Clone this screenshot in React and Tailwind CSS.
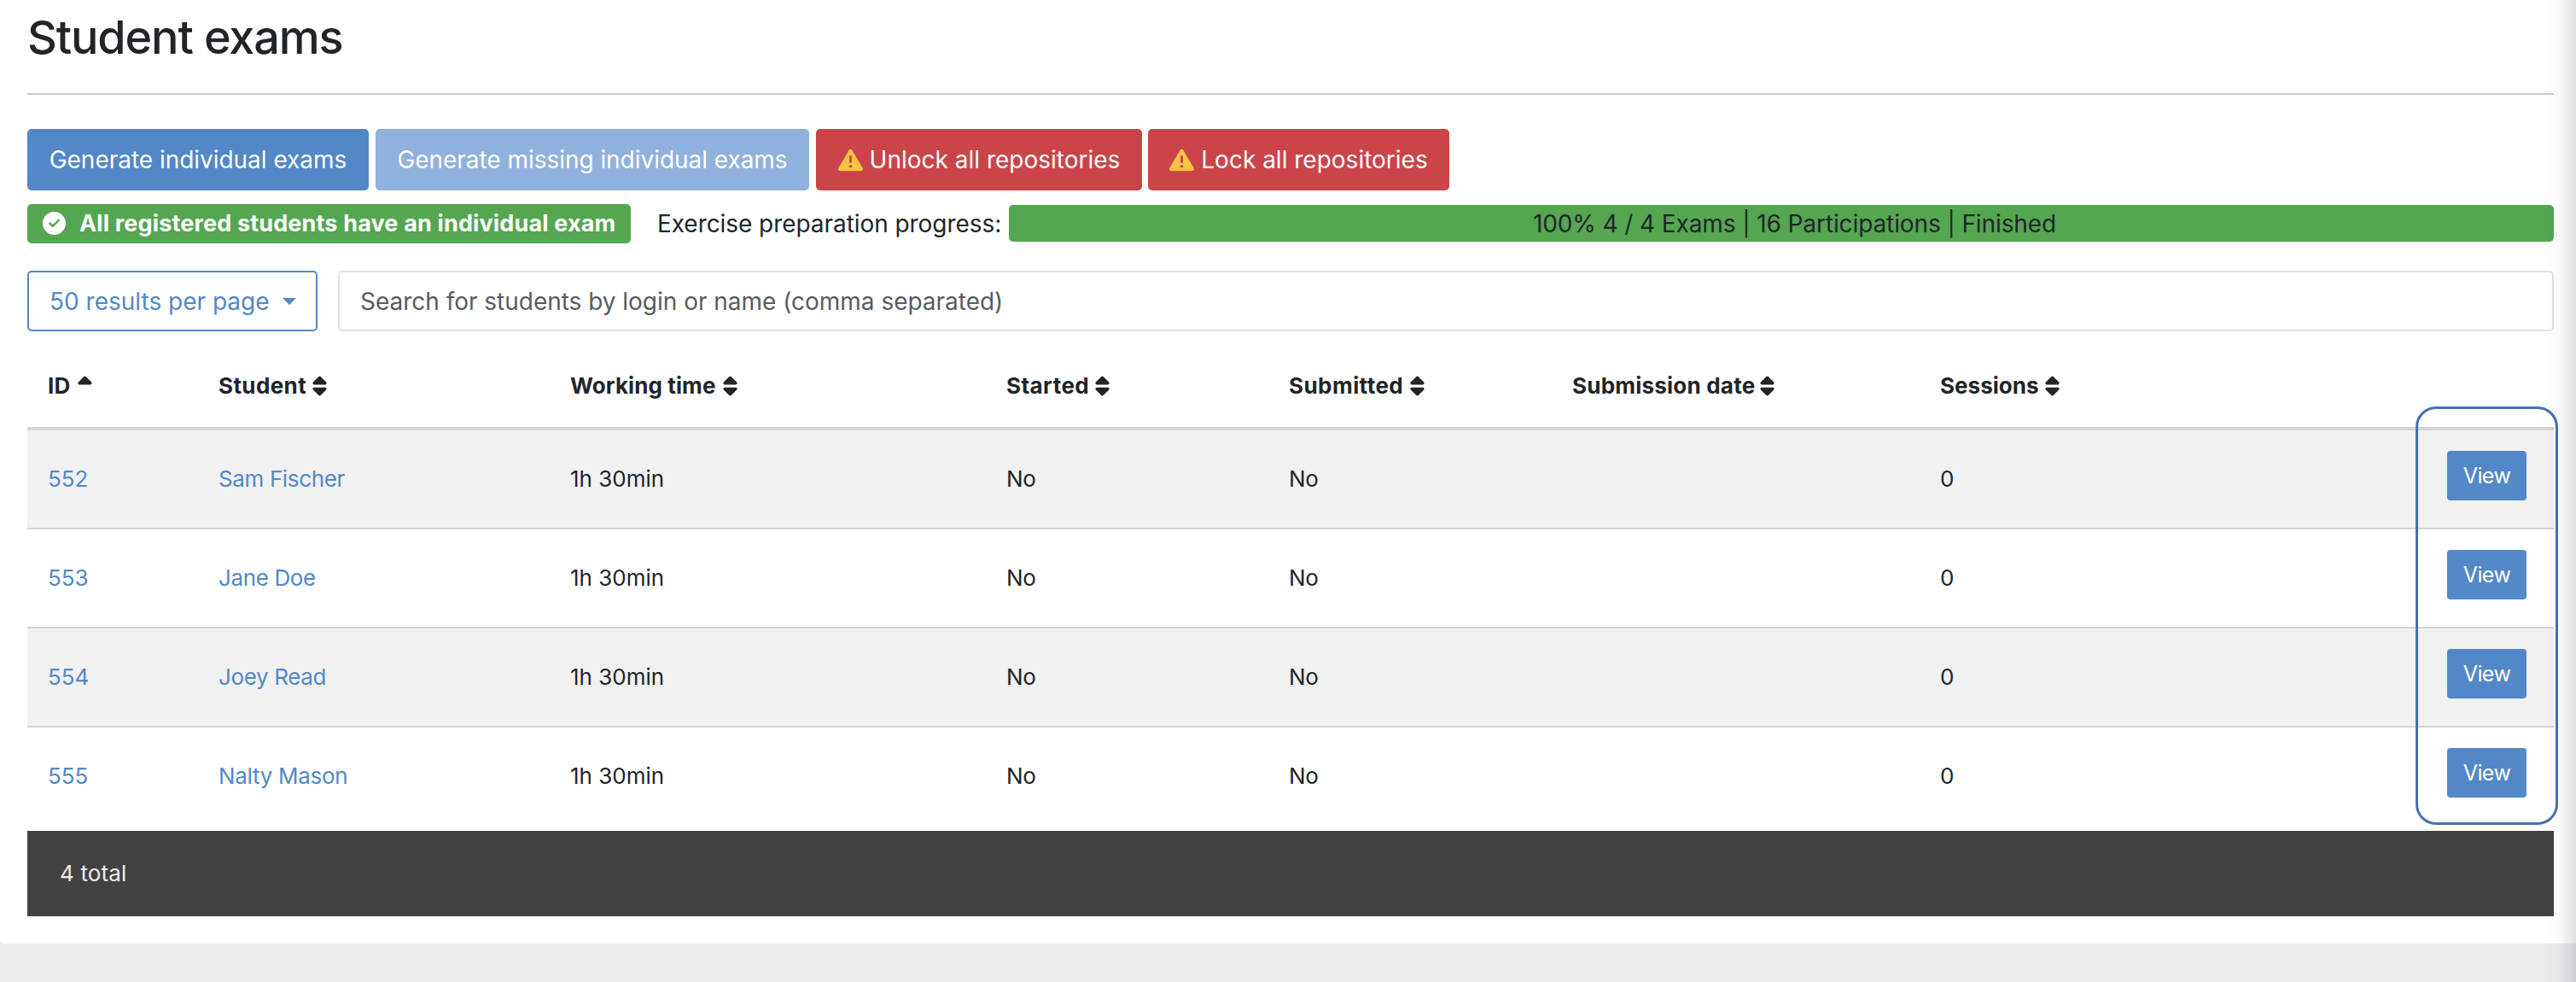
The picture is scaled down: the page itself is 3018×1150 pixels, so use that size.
import { FaCircleCheck, FaSort, FaSortUp, FaTriangleExclamation } from 'react-icons/fa6';

const GRID = 'grid grid-cols-[200px_412px_511px_331px_332px_431px_1fr] pl-6';

const columns = [
  { label: 'ID', tracking: 'tracking-[0.3px]', gap: 'ml-[8px]', sorted: true },
  { label: 'Student', tracking: 'tracking-[0.4px]', gap: 'ml-[7px]' },
  { label: 'Working time', tracking: 'tracking-[0.1px]', gap: 'ml-[8px]' },
  { label: 'Started', tracking: 'tracking-[0.45px]', gap: 'ml-[7px]' },
  { label: 'Submitted', tracking: 'tracking-[0.45px]', gap: 'ml-[8px]' },
  { label: 'Submission date', tracking: 'tracking-[0.22px]', gap: 'ml-[6px]' },
  { label: 'Sessions', tracking: 'tracking-[0.03px]', gap: 'ml-[7px]' },
];

const students = [
  { id: '552', name: 'Sam Fischer', tracking: 'tracking-[-0.37px]' },
  { id: '553', name: 'Jane Doe', tracking: 'tracking-[-0.37px]' },
  { id: '554', name: 'Joey Read', tracking: 'tracking-[-0.37px]' },
  { id: '555', name: 'Nalty Mason', tracking: 'tracking-[-0.3px]' },
];

function Button({ className, children }) {
  return (
    <button className={`flex h-[72px] items-center justify-center whitespace-nowrap rounded-[5px] text-[28px] text-white ${className}`}>
      {children}
    </button>
  );
}

function Warning({ className }) {
  return <FaTriangleExclamation className={`size-[29px] shrink-0 text-[#f6c344] ${className}`} />;
}

function Header() {
  return (
    <div className={`${GRID} h-[100px] items-center border-b-4 border-[#d3d4d9] font-bold`}>
      {columns.map(({ label, tracking, gap, sorted }) => {
        const Icon = sorted ? FaSortUp : FaSort;
        return (
          <div key={label} className="flex items-center whitespace-nowrap">
            <span className={tracking}>{label}</span>
            <Icon className={`h-[26px] w-[17px] ${gap}`} />
          </div>
        );
      })}
    </div>
  );
}

function Row({ student, index, last }) {
  const stripe = index % 2 === 0 ? 'bg-[#f1f1f1]' : '';
  const size = last ? 'h-[121px]' : 'h-[116px] border-b-2 border-[#d3d4d9]';
  return (
    <div className={`${GRID} ${size} ${stripe}`}>
      <div className="pt-[37px] text-[#5288c8]">{student.id}</div>
      <div className={`pt-[37px] text-[#5288c8] ${student.tracking}`}>{student.name}</div>
      <div className="pt-[37px]">1h 30min</div>
      <div className="pt-[37px] tracking-[-0.3px]">No</div>
      <div className="pt-[37px] tracking-[-0.3px]">No</div>
      <div />
      <div className="flex justify-between pr-8">
        <span className="pt-[37px]">0</span>
        <button className="mt-6 h-[58px] w-[93px] rounded-[4px] bg-[#5288c8] text-[25px] tracking-[-0.6px] text-white">View</button>
      </div>
    </div>
  );
}

export default function App() {
  return (
    <div className="relative h-[1150px] w-[3018px] overflow-hidden bg-[#eaebef] font-[Inter,sans-serif] text-[26px] leading-[40px] text-[#212529]">
      <main className="h-[1105px] rounded-bl-[5px] bg-white pl-8 pr-[26px]">
        <h1 className="h-[109px] pt-[12px] text-[54px] font-medium leading-[64px] tracking-[-1.15px]">Student exams</h1>
        <hr className="h-[2px] border-0 bg-[#c8c9ca]" />

        <div className="mt-10 flex">
          <Button className="w-[400px] bg-[#5288c8] tracking-[-0.03px]">Generate individual exams</Button>
          <Button className="ml-2 w-[508px] bg-[#90b1dc] tracking-[-0.04px]">Generate missing individual exams</Button>
          <Button className="ml-2 w-[382px] bg-[#cb444a]">
            <Warning className="mr-[8px]" />
            Unlock all repositories
          </Button>
          <Button className="ml-[7px] w-[353px] bg-[#cb444a]">
            <Warning className="mr-[8px]" />
            Lock all repositories
          </Button>
        </div>

        <div className="mt-4 flex h-[46px] whitespace-nowrap text-[28px]">
          <div className="flex w-[707px] items-center rounded-[5px] bg-[#54a651] pb-px pl-[18px] text-[27px] font-bold tracking-[0.15px] text-white">
            <FaCircleCheck className="mr-[16px] size-[27px]" />
            All registered students have an individual exam
          </div>
          <div className="ml-[31px] w-[412px] pt-[3px] tracking-[-0.06px]">Exercise preparation progress:</div>
          <div className="mt-px flex h-[43px] flex-1 items-center justify-center rounded-[5px] bg-[#54a651] pl-[31px] tracking-[-0.1px]">
            100% 4 / 4 Exams | 16 Participations | Finished
          </div>
        </div>

        <div className="mt-8 flex h-[71px] items-stretch gap-6 text-[28px]">
          <button className="flex w-[340px] items-center whitespace-nowrap rounded-[5px] border-2 border-[#5288c8] pl-[24px] text-[#5288c8]">
            50 results per page
            <span className="ml-[15px] border-x-8 border-t-8 border-x-transparent border-t-[#5288c8]" />
          </button>
          <div className="flex flex-1 items-center rounded-[5px] border-2 border-[#dee2e6] pl-6 tracking-[-0.02px] text-[#595c5f]">
            Search for students by login or name (comma separated)
          </div>
        </div>

        <section className="relative mt-4">
          <Header />
          {students.map((s, i) => (
            <Row key={s.id} student={s} index={i} last={i === students.length - 1} />
          ))}
          <div className="absolute right-[-5px] top-[72px] h-[490px] w-[167px] rounded-[24px] border-[3px] border-[#4472b1]" />
        </section>

        <footer className="flex h-[100px] items-center bg-[#424242] pl-[38px] tracking-[0.14px] text-[#ededed]">4 total</footer>
      </main>
      <div className="pointer-events-none absolute inset-y-0 right-0 w-[40px] bg-linear-to-r from-black/0 via-black/2 to-black/12" />
    </div>
  );
}
